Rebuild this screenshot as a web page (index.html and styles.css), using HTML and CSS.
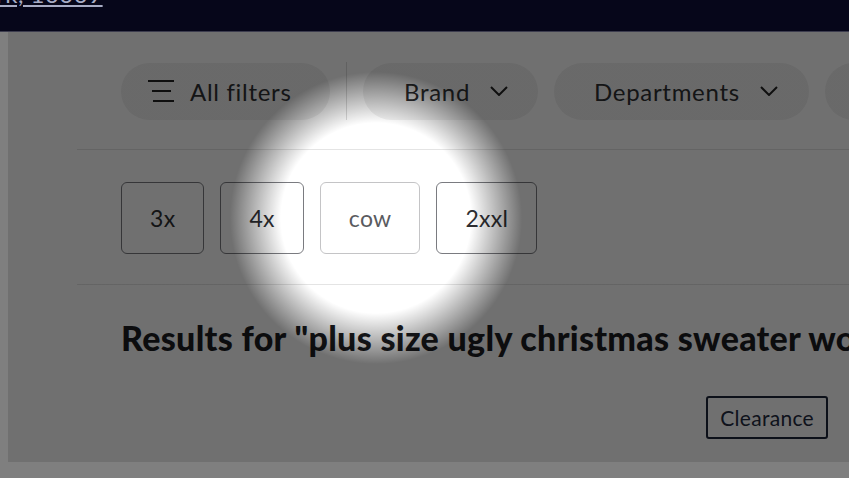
FILE: index.html
```html
<!DOCTYPE html>
<html lang="en">
<head>
    <meta charset="UTF-8">
    <meta name="viewport" content="width=device-width, initial-scale=1.0">
    <title>Search results</title>
    <link rel="stylesheet" href="styles.css">
</head>
<body>
<header class="topbar">
    <a class="location" href="#">rk, 10009</a>
</header>
<main class="panel">
    <div class="content">
        <div class="filters">
            <button class="pill pill-all">
                <svg class="menu-icon" width="26" height="22" viewBox="0 0 26 22">
                    <path d="M0 1h26M4 11h19M5 21h21" stroke="#222" stroke-width="2" fill="none"/>
                </svg>
                <span>All filters</span>
            </button>
            <span class="separator"></span>
            <button class="pill pill-brand">
                <span>Brand</span>
                <svg class="chevron" width="18" height="10" viewBox="0 0 18 10">
                    <path d="M1 1l8 8 8-8" stroke="#222" stroke-width="2" fill="none"/>
                </svg>
            </button>
            <button class="pill pill-dept">
                <span>Departments</span>
                <svg class="chevron" width="18" height="10" viewBox="0 0 18 10">
                    <path d="M1 1l8 8 8-8" stroke="#222" stroke-width="2" fill="none"/>
                </svg>
            </button>
            <button class="pill pill-more"><span>Price</span></button>
        </div>
        <div class="chips">
            <button class="chip">3x</button>
            <button class="chip">4x</button>
            <button class="chip chip-active">cow</button>
            <button class="chip">2xxl</button>
        </div>
        <h1 class="results-title">Results for "plus size ugly christmas sweater women"</h1>
        <div class="tags">
            <button class="tag">Clearance</button>
        </div>
    </div>
</main>
</body>
</html>
```

FILE: styles.css
```css
* {
    margin: 0;
    padding: 0;
    box-sizing: border-box;
}

body {
    font-family: 'Lato', 'Noto Sans', sans-serif;
    width: 849px;
    height: 478px;
    overflow: hidden;
    background-color: #7f7f7f;
    color: #2e2f32;
}

.topbar {
    height: 32px;
    background-color: #06061a;
    border-bottom: 1px solid #3c3c4e;
    overflow: hidden;
}

.location {
    display: block;
    margin-top: -20px;
    margin-left: -4px;
    font-size: 24px;
    line-height: 27px;
    letter-spacing: 0.5px;
    color: #a7abc4;
    text-decoration: underline;
}

.panel {
    position: relative;
    margin-left: 8px;
    height: 430px;
    background-color: #fff;
}

/* dim layer with the spotlight on the chips */
.panel::after {
    content: '';
    position: absolute;
    inset: 0;
    background: radial-gradient(circle at 368px 186px, rgba(0, 0, 0, 0) 95px, rgba(0, 0, 0, 0.56) 146px);
    pointer-events: none;
}

.content {
    margin-left: 69px;
}

.filters {
    display: flex;
    align-items: center;
    gap: 16px;
    padding: 30px 0 29px 44px;
    border-bottom: 1px solid #e4e4e4;
    overflow: hidden;
    white-space: nowrap;
}

.pill {
    flex-shrink: 0;
    display: flex;
    align-items: center;
    height: 57px;
    border: none;
    border-radius: 29px;
    background-color: #f0f0f0;
    font-family: inherit;
    font-size: 24px;
    letter-spacing: 0.7px;
    color: #2e2f32;
}

.pill-all {
    width: 209px;
    padding-left: 27px;
    gap: 16px;
}

.pill-brand {
    width: 175px;
    padding-left: 41px;
    gap: 20px;
}

.pill-dept {
    width: 255px;
    padding-left: 40px;
    gap: 20px;
}

.pill-more {
    width: 120px;
    padding-left: 30px;
}

.separator {
    flex-shrink: 0;
    width: 1px;
    height: 58px;
    background-color: #dcdcdc;
}

.chips {
    display: flex;
    gap: 16px;
    padding: 32px 0 30px 44px;
    border-bottom: 1px solid #e4e4e4;
}

.chip {
    height: 72px;
    padding: 0 28px;
    border: 1.5px solid #7a7b80;
    border-radius: 6px;
    background-color: #fff;
    font-family: inherit;
    font-size: 23px;
    letter-spacing: 0.3px;
    color: #2e2f32;
}

.chip-active {
    border-color: #c4c4c6;
    color: #5a5b5f;
}

.results-title {
    margin-top: 33px;
    padding-left: 44px;
    font-size: 34px;
    line-height: 40px;
    letter-spacing: 0.3px;
    font-weight: 900;
    color: #1b1c1f;
    white-space: nowrap;
}

.tags {
    display: flex;
    justify-content: flex-end;
    margin-top: 38px;
    padding-right: 21px;
}

.tag {
    height: 43px;
    padding: 0 12px;
    border: 2px solid #1c2438;
    border-radius: 3px;
    background-color: #fff;
    font-family: inherit;
    font-size: 21px;
    letter-spacing: 0.3px;
    color: #222a40;
}
```
